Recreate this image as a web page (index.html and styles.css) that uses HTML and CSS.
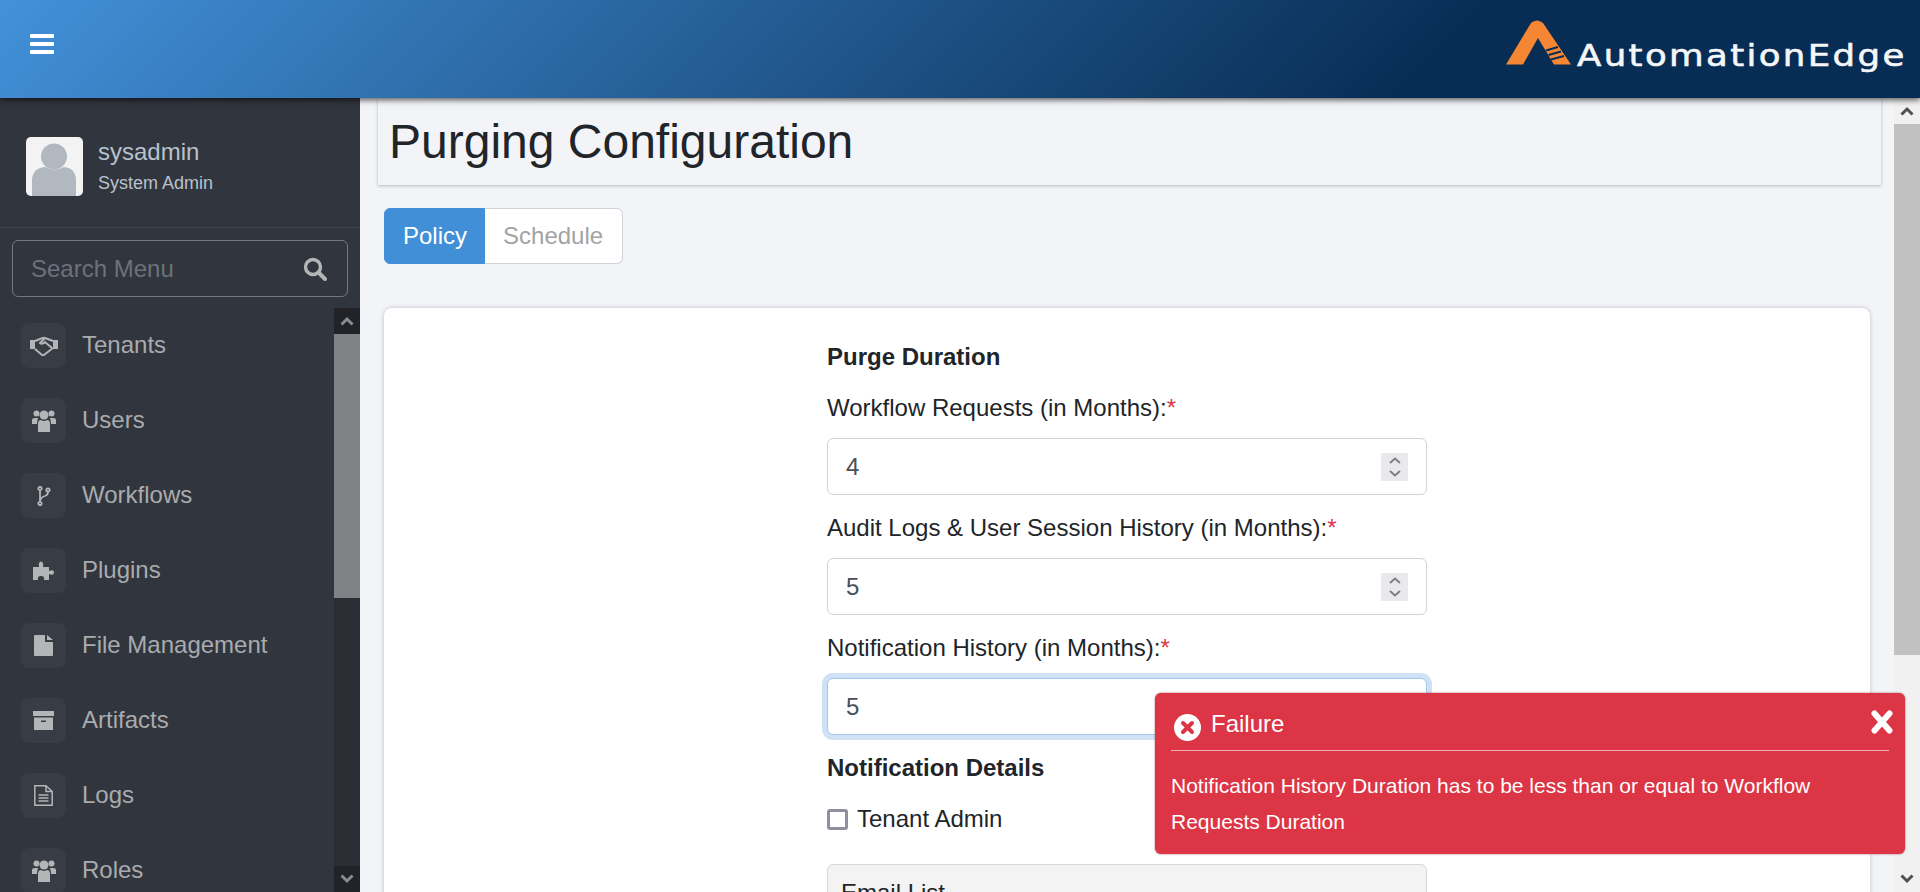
FILE: index.html
```html
<!DOCTYPE html>
<html lang="en">
<head>
  <meta charset="UTF-8" />
  <title>Purging Configuration</title>
  <link rel="stylesheet" href="styles.css">
</head>
<body>
  <header class="topbar">
    <button class="menu-toggle" aria-label="Menu">
      <svg width="24" height="20" viewBox="0 0 24 20"><rect y="0" width="24" height="4" rx="1"/><rect y="8" width="24" height="4" rx="1"/><rect y="16" width="24" height="4" rx="1"/></svg>
    </button>
    <div class="logo">
      <svg class="logo-mark" width="66" height="46" viewBox="0 0 66 46">
        <path class="logo-a" d="M0 44.500 L25 3 Q31 -2 37 3 L65 44.500 H48 L32 18 L17 44.500 Z"/>
        <path class="logo-cut" d="M40 30.500 L52 27 M42.500 35 L55 31.500 M45 39.500 L58 36"/>
      </svg>
      <span class="logo-text">AutomationEdge</span>
    </div>
  </header>

  <div class="layout">
    <aside class="sidebar">
      <div class="user-panel">
        <div class="avatar">
          <svg width="57" height="59" viewBox="0 0 57 59"><circle cx="28" cy="19.500" r="13"/><path d="M6 59 V44 Q6 31 19 30 Q28 35 38 30 Q50 31 50 44 V59 Z"/></svg>
        </div>
        <div class="user-info">
          <div class="user-name">sysadmin</div>
          <div class="user-role">System Admin</div>
        </div>
      </div>
      <div class="search-wrap">
        <div class="search-box">
          <span>Search Menu</span>
          <svg width="24" height="24" viewBox="0 0 24 24" fill="none" stroke="#b4b5b7"><circle cx="10" cy="10" r="7.500" stroke-width="3.400"/><path d="M15.500 15.500 L22 22" stroke-width="4" stroke-linecap="round"/></svg>
        </div>
      </div>
      <div class="menu-area">
        <ul class="menu">
          <li><span class="menu-icon">
            <svg width="28" height="20" viewBox="0 0 28 20" fill="none" stroke="#b4b5b7" stroke-width="2"><path d="M0 4 H5 V13 H0 Z M23 4 H28 V13 H23 Z" fill="#b4b5b7" stroke="none"/><path d="M5 5 L10 3 Q13 1 15 2 L23 5 M23 12 L14 19 Q13 19.500 12 19 L5 13 M15 2 L10 7 Q12 9 15 6 L22 12"/></svg>
          </span>Tenants</li>
          <li><span class="menu-icon">
            <svg width="24" height="22" viewBox="0 0 24 22" fill="#b4b5b7"><circle cx="4.500" cy="3.500" r="3"/><circle cx="19.500" cy="3.500" r="3"/><circle cx="12" cy="5" r="4.500"/><path d="M0 14 V10 Q0 8 3 8 H6 Q5 11 5 14 Z M24 14 V10 Q24 8 21 8 H18 Q19 11 19 14 Z M6 22 V14 Q6 10 9 10 Q12 12 15 10 Q18 10 18 14 V22 Z"/></svg>
          </span>Users</li>
          <li><span class="menu-icon">
            <svg width="14" height="20" viewBox="0 0 14 20" fill="none" stroke="#b4b5b7" stroke-width="1.800"><circle cx="3" cy="2.500" r="1.700"/><circle cx="3" cy="17.500" r="1.700"/><circle cx="11" cy="4" r="1.700"/><path d="M3 4.500 V15.500 M3 15 Q4 11 8 10 Q11 9 11 6"/></svg>
          </span>Workflows</li>
          <li><span class="menu-icon">
            <svg width="22" height="20" viewBox="0 0 22 20" fill="#b4b5b7"><path d="M0 6 H6 Q5 1 8 .500 Q11 1 10 6 H16 V10 Q21 8 21 11.500 Q21 15 16 13 V19 H11 Q12 15 8 15 Q4 15 5 19 H0 Z"/></svg>
          </span>Plugins</li>
          <li><span class="menu-icon">
            <svg width="19" height="21" viewBox="0 0 19 21" fill="#b4b5b7"><path d="M0 1 Q0 0 1 0 H11 V7 H19 V20 Q19 21 18 21 H1 Q0 21 0 20 Z M13 0 L19 5 H13 Z"/></svg>
          </span>File Management</li>
          <li><span class="menu-icon">
            <svg width="21" height="19" viewBox="0 0 21 19" fill="#b4b5b7"><rect width="21" height="5"/><path d="M1 6.500 H20 V19 H1 Z M8 9.500 V11 H13 V9.500 Z" fill-rule="evenodd"/></svg>
          </span>Artifacts</li>
          <li><span class="menu-icon">
            <svg width="19" height="21" viewBox="0 0 19 21" fill="none" stroke="#b4b5b7" stroke-width="1.500"><path d="M.800 .800 H12 L18.200 6.500 V20.200 H.800 Z M12 .800 V6.500 H18.200"/><path d="M4.500 10 H14.500 M4.500 13 H14.500 M4.500 16 H14.500"/></svg>
          </span>Logs</li>
          <li><span class="menu-icon">
            <svg width="24" height="22" viewBox="0 0 24 22" fill="#b4b5b7"><circle cx="4.500" cy="3.500" r="3"/><circle cx="19.500" cy="3.500" r="3"/><circle cx="12" cy="5" r="4.500"/><path d="M0 14 V10 Q0 8 3 8 H6 Q5 11 5 14 Z M24 14 V10 Q24 8 21 8 H18 Q19 11 19 14 Z M6 22 V14 Q6 10 9 10 Q12 12 15 10 Q18 10 18 14 V22 Z"/></svg>
          </span>Roles</li>
        </ul>
        <div class="side-scroll">
          <div class="side-btn"><svg width="14" height="10" viewBox="0 0 14 10" fill="none" stroke="#8a8b8e" stroke-width="3"><path d="M1.500 8.500 L7 3 L12.500 8.500"/></svg></div>
          <div class="side-thumb"></div>
          <div class="side-track"></div>
          <div class="side-btn"><svg width="14" height="10" viewBox="0 0 14 10" fill="none" stroke="#8a8b8e" stroke-width="3"><path d="M1.500 1.500 L7 7 L12.500 1.500"/></svg></div>
        </div>
      </div>
    </aside>

    <main class="content">
      <div class="page-title"><h1>Purging Configuration</h1></div>

      <div class="tabs">
        <a class="tab active">Policy</a>
        <a class="tab">Schedule</a>
      </div>

      <section class="card">
        <form class="policy-form">
          <h2 class="purge-head">Purge Duration</h2>

          <label>Workflow Requests (in Months):<span class="req">*</span></label>
          <div class="num-field">
            <span>4</span>
            <span class="spin"><svg width="14" height="22" viewBox="0 0 14 22" fill="none" stroke="#7d7d82" stroke-width="1.800"><path d="M2 7 L7 2.500 L12 7 M2 15 L7 19.500 L12 15"/></svg></span>
          </div>

          <label>Audit Logs &amp; User Session History (in Months):<span class="req">*</span></label>
          <div class="num-field">
            <span>5</span>
            <span class="spin"><svg width="14" height="22" viewBox="0 0 14 22" fill="none" stroke="#7d7d82" stroke-width="1.800"><path d="M2 7 L7 2.500 L12 7 M2 15 L7 19.500 L12 15"/></svg></span>
          </div>

          <label>Notification History (in Months):<span class="req">*</span></label>
          <div class="num-field focused">
            <span>5</span>
            <span class="spin"><svg width="14" height="22" viewBox="0 0 14 22" fill="none" stroke="#7d7d82" stroke-width="1.800"><path d="M2 7 L7 2.500 L12 7 M2 15 L7 19.500 L12 15"/></svg></span>
          </div>

          <h2>Notification Details</h2>
          <div class="check-row"><span class="check"></span>Tenant Admin</div>

          <div class="email-list">Email List</div>
        </form>
      </section>
    </main>

    <div class="page-scroll">
      <div class="page-btn"><svg width="14" height="10" viewBox="0 0 14 10" fill="none" stroke="#505050" stroke-width="3"><path d="M1.500 8.500 L7 3 L12.500 8.500"/></svg></div>
      <div class="page-thumb"></div>
      <div class="page-track"></div>
      <div class="page-btn"><svg width="14" height="10" viewBox="0 0 14 10" fill="none" stroke="#505050" stroke-width="3"><path d="M1.500 1.500 L7 7 L12.500 1.500"/></svg></div>
    </div>
  </div>

  <div class="toast">
    <div class="toast-head">
      <svg class="toast-icon" width="27" height="27" viewBox="0 0 27 27"><circle cx="13.500" cy="13.500" r="13.500" fill="#fff"/><path d="M9 9 L18 18 M18 9 L9 18" stroke="#dc3545" stroke-width="4" stroke-linecap="round"/></svg>
      <span class="toast-title">Failure</span>
      <svg class="toast-close" width="22" height="24" viewBox="0 0 22 24"><path d="M3.500 3.500 L18.500 20.500 M18.500 3.500 L3.500 20.500" stroke="#fff" stroke-width="6" stroke-linecap="round"/></svg>
    </div>
    <p class="toast-msg">Notification History Duration has to be less than or equal to Workflow Requests Duration</p>
  </div>
</body>
</html>
```

FILE: styles.css
```css
* { box-sizing: border-box; }
html, body { height: 100%; }
body { margin: 0; overflow: hidden; font-family: "Liberation Sans", Arial, sans-serif; font-size: 24px; line-height: 36px; color: #212529; background: #f2f4f8; display: flex; flex-direction: column; }

.topbar { height: 98px; flex: none; display: flex; align-items: flex-start; justify-content: space-between; background: linear-gradient(135deg, #4391d9 0%, #082d55 74%); box-shadow: 0 2px 6px rgba(0,0,0,.65); position: relative; z-index: 2; }
.menu-toggle { background: none; border: none; padding: 0; margin: 34px 0 0 30px; height: 20px; fill: #fff; }
.logo { display: flex; align-items: flex-start; margin: 20px 15px 0 0; }
.logo-mark { display: block; }
.logo-a { fill: #f58634; }
.logo-cut { stroke: #082d55; stroke-width: 2; fill: none; }
.logo-text { width: 328px; white-space: nowrap; color: #f4f6f8; font-family: "DejaVu Sans", sans-serif; font-size: 30px; line-height: 36px; letter-spacing: 2px; margin: 18px 0 0 5px; -webkit-text-stroke: .6px #f4f6f8; transform: scaleX(1.185); transform-origin: left center; }

.layout { flex: 1; display: flex; min-height: 0; }

.sidebar { width: 360px; flex: none; background: #31353d; display: flex; flex-direction: column; }
.user-panel { height: 130px; flex: none; display: flex; align-items: center; padding: 8px 0 0 26px; gap: 15px; border-bottom: 1px solid #41454d; }
.avatar { width: 57px; height: 59px; background: #f3f3f3; border-radius: 5px; overflow: hidden; fill: #b1b8bf; }
.avatar svg { display: block; }
.user-info { padding-top: 2px; }
.user-name { color: #b8c2cc; line-height: 30px; }
.user-role { color: #b8c2cc; font-size: 18px; line-height: 30px; margin-top: 1px; }
.search-wrap { padding: 12px 12px 11px; flex: none; }
.search-box { height: 57px; border: 1px solid #74777d; border-radius: 6px; display: flex; align-items: center; justify-content: space-between; padding: 0 20px 0 18px; color: #6c727b; }
.menu-area { flex: 1; display: flex; min-height: 0; overflow: hidden; }
.menu { flex: 1; list-style: none; margin: 0; padding: 15px 0 0 21px; color: #a9abae; }
.menu li { height: 45px; line-height: 43px; margin-bottom: 30px; display: flex; align-items: flex-start; gap: 16px; }
.menu-icon { width: 45px; height: 45px; background: #383c45; border-radius: 8px; display: flex; align-items: center; justify-content: center; }
.side-scroll { width: 26px; flex: none; display: flex; flex-direction: column; background: #2a2d34; }
.side-btn { height: 26px; background: #212329; display: flex; align-items: center; justify-content: center; flex: none; }
.side-thumb { height: 264px; background: #808184; flex: none; }
.side-track { flex: 1; }

.content { flex: 1; min-width: 0; padding: 0 13px 0 18px; overflow: hidden; }
.page-title { height: 87px; display: flex; align-items: center; padding-left: 11px; background: #f2f4f8; box-shadow: 0 1px 3px rgba(0,0,0,.25); }
h1 { margin: 0; font-size: 48px; font-weight: 400; line-height: 58px; }
.tabs { display: flex; margin: 23px 0 44px 6px; }
.tab { height: 56px; line-height: 54px; padding: 0 19px 0 18px; background: #fff; color: #a3a3a3; border: 1px solid #ced4da; border-left: none; border-radius: 0 6px 6px 0; }
.tab.active { padding: 0 17px 0 18px; background: #418fd6; color: #fff; border: 1px solid #418fd6; border-radius: 6px 0 0 6px; }
.card { margin: 0 11px 0 6px; height: 700px; background: #fff; border-radius: 8px; box-shadow: 0 0 4px rgba(0,0,0,.22); padding-top: 30px; }
.policy-form { width: 600px; margin: 0 auto; }
h2 { margin: 0 0 15px; font-size: 24px; line-height: 36px; font-weight: 700; }
.purge-head { line-height: 38px; margin-bottom: 14px; }
label { display: block; margin-bottom: 12px; }
.req { color: #dc3545; }
.num-field { height: 57px; margin-bottom: 15px; padding: 0 18px 0 18px; border: 1px solid #ced4da; border-radius: 6px; background: #fff; color: #495057; display: flex; align-items: center; justify-content: space-between; }
.num-field.focused { border-color: #a4c9ec; box-shadow: 0 0 0 5px #cfe2f5; }
.spin { width: 27px; height: 28px; background: #e9e9ed; display: flex; align-items: center; justify-content: center; }
.check-row { display: flex; align-items: center; gap: 9px; margin-bottom: 27px; }
.check { width: 21px; height: 21px; border: 3px solid #8f8f9d; border-radius: 3px; background: #fff; }
.email-list { height: 120px; background: #f3f3f3; border: 1px solid #d5d8dc; border-radius: 6px; padding: 10px 13px; }

.page-scroll { width: 26px; flex: none; display: flex; flex-direction: column; background: #f1f1f1; }
.page-btn { height: 26px; flex: none; display: flex; align-items: center; justify-content: center; }
.page-thumb { height: 531px; flex: none; background: #c1c1c1; }
.page-track { flex: 1; }

.toast { position: absolute; left: 1155px; top: 693px; width: 750px; height: 161px; background: #dc3545; color: #fff; border-radius: 6px; padding: 0 16px; box-shadow: 0 0 2px rgba(120,20,30,.7); z-index: 3; }
.toast-head { height: 58px; display: flex; align-items: flex-start; border-bottom: 1px solid #efb1b7; position: relative; }
.toast-icon { margin: 21px 0 0 3px; }
.toast-title { font-size: 24px; line-height: 40px; margin: 11px 0 0 10px; }
.toast-close { position: absolute; right: -4px; top: 17px; }
.toast-msg { margin: 17px 0 0; font-size: 21px; line-height: 36px; }
```
